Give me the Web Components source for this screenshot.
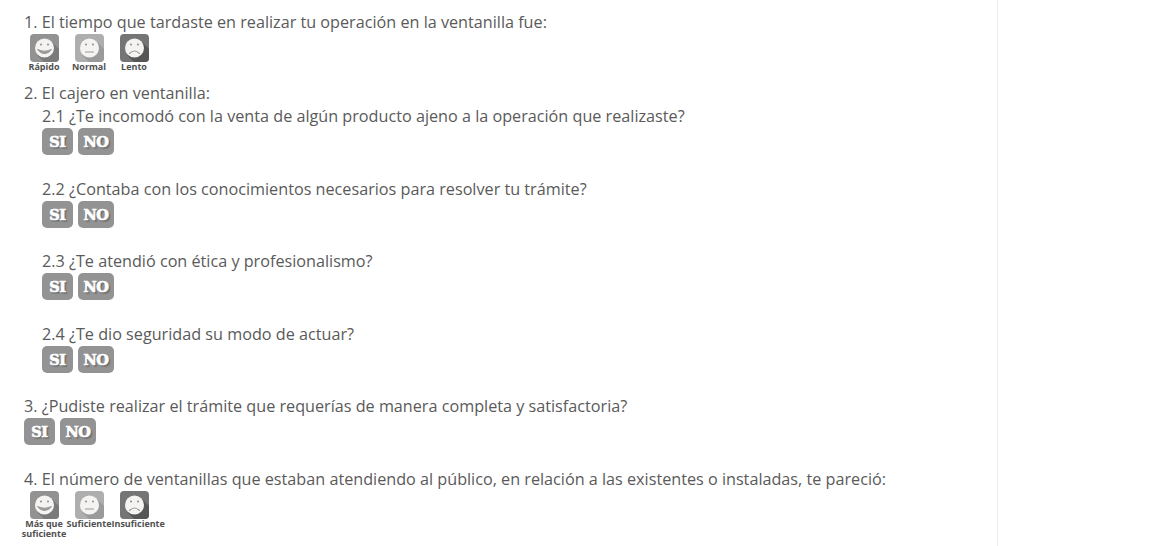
<!DOCTYPE html>
<html>
<head>
<meta charset="utf-8">
<style>
    html, body { margin: 0; background: #fff; }
    body { font-family: "Open Sans", sans-serif; color: #5a5a5a; overflow: hidden; height: 546px; }
</style>
</head>
<body>
<encuesta-panel>
    <encuesta-pregunta texto="1. El tiempo que tardaste en realizar tu operación en la ventanilla fue:">
        <caritas-opciones opciones="Rápido|Normal|Lento"></caritas-opciones>
    </encuesta-pregunta>
    <encuesta-pregunta texto="2. El cajero en ventanilla:" class="grupo">
        <encuesta-pregunta sub texto="2.1 ¿Te incomodó con la venta de algún producto ajeno a la operación que realizaste?"><si-no></si-no></encuesta-pregunta>
        <encuesta-pregunta sub texto="2.2 ¿Contaba con los conocimientos necesarios para resolver tu trámite?"><si-no></si-no></encuesta-pregunta>
        <encuesta-pregunta sub texto="2.3 ¿Te atendió con ética y profesionalismo?"><si-no></si-no></encuesta-pregunta>
        <encuesta-pregunta sub texto="2.4 ¿Te dio seguridad su modo de actuar?"><si-no></si-no></encuesta-pregunta>
    </encuesta-pregunta>
    <encuesta-pregunta texto="3. ¿Pudiste realizar el trámite que requerías de manera completa y satisfactoria?" class="tres">
        <si-no></si-no>
    </encuesta-pregunta>
    <encuesta-pregunta texto="4. El número de ventanillas que estaban atendiendo al público, en relación a las existentes o instaladas, te pareció:" class="cuatro">
        <caritas-opciones opciones="Más que suficiente|Suficiente|Insuficiente"></caritas-opciones>
    </encuesta-pregunta>
</encuesta-panel>

<script>
class EncuestaPanel extends HTMLElement {
    constructor() {
        super();
        this.attachShadow({ mode: 'open' });
        this.shadowRoot.innerHTML = `
            <style>
                :host {
                    display: flex;
                    flex-direction: column;
                    box-sizing: border-box;
                    width: 998px;
                    height: 546px;
                    padding: 11px 0 0 24px;
                    border-right: 1px solid #eee;
                }
            </style>
            <slot></slot>
        `;
    }
}

class EncuestaPregunta extends HTMLElement {
    constructor() {
        super();
        this.attachShadow({ mode: 'open' });
        this.shadowRoot.innerHTML = `
            <style>
                :host { display: block; }
                :host([sub]) { margin-left: 18px; height: 72.6px; }
                :host(.grupo) { height: 313px; }
                :host(.cuatro) { margin-top: 23px; }
                p {
                    margin: 0;
                    font-size: 16.19px;
                    line-height: 23px;
                    white-space: nowrap;
                }
            </style>
            <p></p>
            <slot></slot>
        `;
    }

    connectedCallback() {
        this.shadowRoot.querySelector('p').textContent = this.getAttribute('texto');
    }
}

class CaritasOpciones extends HTMLElement {
    constructor() {
        super();
        this.attachShadow({ mode: 'open' });
        this.shadowRoot.innerHTML = `
            <style>
                :host {
                    display: block;
                    height: 48px;
                }
                #lista {
                    display: flex;
                    margin-left: -2.5px;
                }
                .opcion {
                    width: 45px;
                    flex: none;
                    display: flex;
                    flex-direction: column;
                    align-items: center;
                }
                .label {
                    width: 45px;
                    flex: none;
                    font-size: 9px;
                    font-weight: 700;
                    line-height: 10px;
                    text-align: center;
                    color: #505050;
                }
                svg { display: block; flex: none; }
            </style>
            <div id="lista"></div>
        `;
    }

    connectedCallback() {
        const caras = [
            { fondo: '#929292', sombra: '#7a7a7a', boca: 'M7.5 15.5 Q14.5 23.5 21.5 15.5 Q14.5 19 7.5 15.5Z', relleno: '#9a9a9a' },
            { fondo: '#aeaeae', sombra: '#9a9a9a', boca: 'M10.5 18 H18.5', relleno: 'none' },
            { fondo: '#757575', sombra: '#565656', boca: 'M9.5 19.5 Q14.5 14.5 19.5 19.5', relleno: 'none' }
        ];
        const lista = this.shadowRoot.querySelector('#lista');
        this.getAttribute('opciones').split('|').forEach((texto, i) => {
            const c = caras[i];
            const op = document.createElement('div');
            op.className = 'opcion';
            op.innerHTML = `
                <svg width="29" height="28" viewBox="0 0 29 28">
                    <defs><clipPath id="c${i}"><rect width="29" height="28" rx="4"/></clipPath></defs>
                    <g clip-path="url(#c${i})">
                        <rect width="29" height="28" fill="${c.fondo}"/>
                        <path d="M7 21 L21 7 L34 20 L34 34 L20 34Z" fill="${c.sombra}"/>
                        <circle cx="14.5" cy="14" r="9.5" fill="#f4f3f1"/>
                        <circle cx="11" cy="10.5" r="1" fill="#8d8d8d"/>
                        <circle cx="18" cy="10.5" r="1" fill="#8d8d8d"/>
                        <path d="${c.boca}" fill="${c.relleno}" stroke="#9a9a9a" stroke-width="1.1" stroke-linecap="round"/>
                    </g>
                </svg>
                <div class="label"></div>`;
            op.querySelector('.label').textContent = texto;
            lista.appendChild(op);
        });
    }
}

class SiNo extends HTMLElement {
    constructor() {
        super();
        this.attachShadow({ mode: 'open' });
        this.shadowRoot.innerHTML = `
            <style>
                :host {
                    display: flex;
                    gap: 5px;
                }
                span {
                    display: block;
                    height: 27px;
                    border-radius: 5px;
                    background: #939393;
                    color: #fff;
                    font: 900 14.5px/27px "DejaVu Serif", serif;
                    -webkit-text-stroke: 0.7px #fff;
                    text-align: center;
                    letter-spacing: -0.5px;
                    text-shadow: 1px 1px 0 #666, 2px 2px 1px #777;
                }
                .si { width: 31px; }
                .no { width: 36px; }
            </style>
            <span class="si">SI</span>
            <span class="no">NO</span>
        `;
    }
}

customElements.define('encuesta-panel', EncuestaPanel);
customElements.define('encuesta-pregunta', EncuestaPregunta);
customElements.define('caritas-opciones', CaritasOpciones);
customElements.define('si-no', SiNo);
</script>
</body>
</html>
